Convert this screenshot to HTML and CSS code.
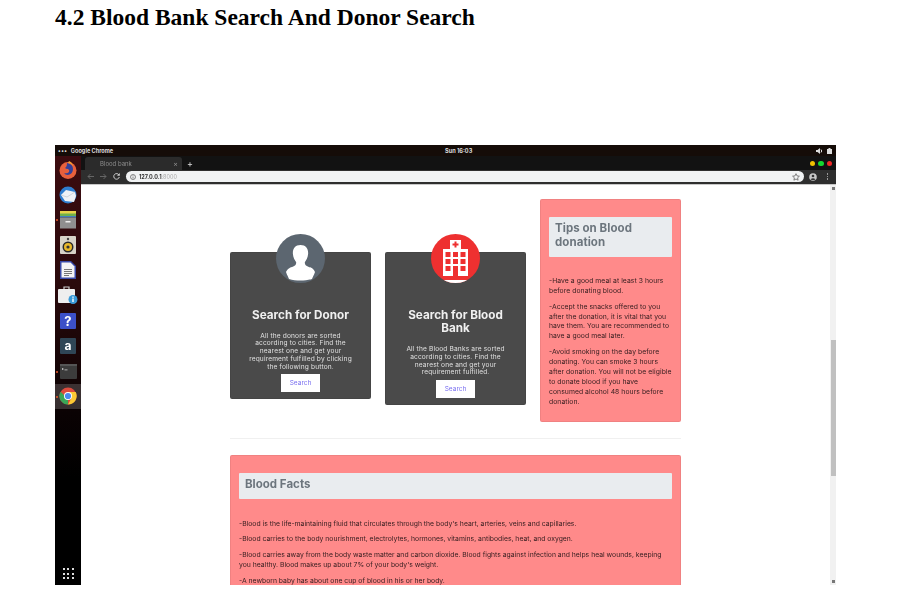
FILE: index.html
```html
<!DOCTYPE html>
<html lang="en">
<head>
    <meta charset="UTF-8">
    <meta name="viewport" content="width=device-width, initial-scale=1.0">
    <title>4.2 Blood Bank Search And Donor Search</title>
    <link rel="stylesheet" href="styles.css">
</head>
<body>
    <h1 class="doc-title">4.2 Blood Bank Search And Donor Search</h1>

    <div class="desktop">
        <div class="topbar">
            <div class="topbar-left"><span class="dots">&bull;&bull;&bull;</span> Google Chrome</div>
            <div class="clock">Sun 16:03</div>
            <div class="tray">
                <svg width="7" height="6" viewBox="0 0 7 6"><path d="M0 2h1.500L4 0v6L1.500 4H0z" fill="#ddd"/><path d="M5 1.500q1.500 1.500 0 3" stroke="#ddd" fill="none"/></svg>
                <svg width="5" height="6" viewBox="0 0 5 6"><path d="M1.500 0h2v1H5v5H0V1h1.500z" fill="#ddd"/></svg>
            </div>
        </div>

        <div class="workspace">
            <nav class="dock">
                <div class="dock-item">
                    <svg width="20" height="20" viewBox="0 0 20 20"><circle cx="10" cy="10.500" r="8.500" fill="#e8603c"/><path d="M9 3q6 1 6 6 0 5-5 6-3 0-4-2 3 1 5-1 1-2-1-3-2 0-3-1 2-1 2-5z" fill="#33409a"/><path d="M11 1q3 1 4 5-2-3-5-3z" fill="#f4a030"/></svg>
                </div>
                <div class="dock-item">
                    <svg width="20" height="20" viewBox="0 0 20 20"><circle cx="10" cy="10" r="8.500" fill="#2f7ed0"/><path d="M3 10l5-5 9 2 1 4-2 6-9-1z" fill="#eef2f6"/><path d="M3 10l6 2 8-5" stroke="#c6ccd4" fill="none" stroke-width=".8"/></svg>
                </div>
                <div class="dock-item running">
                    <svg width="18" height="18" viewBox="0 0 18 18"><rect x="1" y="0" width="16" height="3" fill="#e8d24a"/><rect x="1" y="2.500" width="16" height="3" fill="#6fb04a"/><rect x="1" y="5" width="16" height="1.500" fill="#3f7fc0"/><rect x="1" y="6.500" width="16" height="11" fill="#8f8f8f"/><rect x="6.500" y="10" width="5" height="1.500" fill="#eee"/></svg>
                </div>
                <div class="dock-item">
                    <svg width="16" height="18" viewBox="0 0 16 18"><rect width="16" height="18" rx="1" fill="#d8d4c8"/><circle cx="8" cy="3" r="1.200" fill="#444"/><circle cx="8" cy="11" r="5.500" fill="#2a2a2a"/><circle cx="8" cy="11" r="4" fill="#e8b82a"/><circle cx="8" cy="11" r="1.600" fill="#333"/></svg>
                </div>
                <div class="dock-item">
                    <svg width="16" height="18" viewBox="0 0 16 18"><path d="M0 0h11l5 5v13H0z" fill="#3a4aa8"/><path d="M1.500 1.500h9l4 4v11h-13z" fill="#f4f4f4"/><path d="M4 8h8v1H4zM4 10h8v1H4zM4 12h8v1H4zM4 14h5v1H4z" fill="#777"/></svg>
                </div>
                <div class="dock-item">
                    <svg width="21" height="19" viewBox="0 0 21 19"><rect x="0" y="3" width="17" height="14" rx="1" fill="#eeeeee"/><path d="M6 3V1h5v2" stroke="#ccc" fill="none" stroke-width="1.200"/><circle cx="15" cy="13.500" r="4.500" fill="#3a9ad8"/><rect x="14.300" y="12.500" width="1.400" height="3.500" fill="#fff"/><rect x="14.300" y="10.500" width="1.400" height="1.300" fill="#fff"/></svg>
                </div>
                <div class="dock-item">
                    <div class="dock-tile tile-help">?</div>
                </div>
                <div class="dock-item">
                    <div class="dock-tile tile-amazon">a</div>
                </div>
                <div class="dock-item running">
                    <svg width="17" height="15" viewBox="0 0 17 15"><rect width="17" height="15" rx="1" fill="#3c3c3c"/><rect width="17" height="2" fill="#555"/><path d="M2 4l2 1-2 1z" fill="#ddd"/><rect x="4.500" y="5.500" width="3" height=".8" fill="#ccc"/></svg>
                </div>
                <div class="dock-item running active">
                    <svg width="18" height="18" viewBox="0 0 18 18"><circle cx="9" cy="9" r="8.500" fill="#dd4b3e"/><path d="M1.600 13.300A8.500 8.500 0 0 1 1.600 4.700L6 9l3 4-2 4.300z" fill="#3aa757"/><path d="M9 9L1.600 13.300A8.500 8.500 0 0 0 9 17.500z" fill="#3aa757"/><path d="M9 5h7.700A8.500 8.500 0 0 1 9 17.500L12.500 11z" fill="#fcc934"/><circle cx="9" cy="9" r="4" fill="#fff"/><circle cx="9" cy="9" r="3.100" fill="#4a8af0"/></svg>
                </div>
                <div class="dock-apps">
                    <i></i><i></i><i></i><i></i><i></i><i></i><i></i><i></i><i></i>
                </div>
            </nav>

            <div class="browser">
                <div class="tabstrip">
                    <div class="tab">
                        <span class="tab-title">Blood bank</span>
                        <span class="tab-close">&times;</span>
                    </div>
                    <span class="new-tab">+</span>
                    <div class="window-dots">
                        <i class="dot-yellow"></i><i class="dot-green"></i><i class="dot-red"></i>
                    </div>
                </div>

                <div class="toolbar">
                    <div class="nav-buttons">
                        <svg width="7" height="7" viewBox="0 0 7 7"><path d="M7 3.500H1M3.500 1L1 3.500 3.500 6" stroke="#666" fill="none"/></svg>
                        <svg width="7" height="7" viewBox="0 0 7 7"><path d="M0 3.500h6M3.500 1L6 3.500 3.500 6" stroke="#666" fill="none"/></svg>
                        <svg width="7" height="7" viewBox="0 0 7 7"><path d="M6 2A2.800 2.800 0 1 0 6.300 4" stroke="#ccc" fill="none"/><path d="M6.800 0v2.800H4z" fill="#ccc"/></svg>
                    </div>
                    <div class="urlbar">
                        <svg width="6" height="6" viewBox="0 0 6 6"><circle cx="3" cy="3" r="2.500" stroke="#555" fill="none" stroke-width=".7"/><path d="M3 2.500v2M3 1.400v.6" stroke="#555" stroke-width=".7"/></svg>
                        <span class="url"><b>127.0.0.1</b>:8000</span>
                        <svg class="star" width="8" height="8" viewBox="0 0 8 8"><path d="M4 .7l1 2.200 2.400.3-1.800 1.600.5 2.400L4 6 1.900 7.200l.5-2.400L.6 3.200 3 2.900z" stroke="#666" fill="none" stroke-width=".8"/></svg>
                    </div>
                    <div class="toolbar-right">
                        <svg width="8" height="8" viewBox="0 0 8 8"><circle cx="4" cy="4" r="3.800" fill="#c8c8c8"/><circle cx="4" cy="3" r="1.300" fill="#333"/><path d="M1.500 6.200q2.500-2 5 0-2.500 1.700-5 0z" fill="#333"/></svg>
                        <span class="menu-dots"><i></i><i></i><i></i></span>
                    </div>
                </div>

                <div class="viewport">
                    <div class="page">
                        <div class="row">
                            <div class="card card-search">
                                <div class="avatar avatar-donor">
                                    <svg width="49" height="49" viewBox="0 0 49 49"><path d="M24.500 11c-5.500 0-8 4-7.600 9 .3 3.500 1.800 6.300 3.300 8.200 0 2.300-.8 3.300-3 4.200-3 1.200-5.800 2-7.200 5.600 1 3 2.500 5.500 3 7 3.500 1 7.500 1.500 11.500 1.500s8-.5 11.500-1.500c.5-1.500 2-4 3-7-1.400-3.600-4.200-4.400-7.200-5.600-2.200-.9-3-1.900-3-4.200 1.500-1.900 3-4.700 3.300-8.200.4-5-2.100-9-7.600-9z" fill="#fff"/></svg>
                                </div>
                                <h2>Search for Donor</h2>
                                <p>All the donors are sorted according to cities. Find the nearest one and get your requirement fulfilled by clicking the following button.</p>
                                <button class="search-btn">Search</button>
                            </div>

                            <div class="card card-search">
                                <div class="avatar avatar-bank">
                                    <svg width="49" height="49" viewBox="0 0 49 49"><path d="M6 46h37l-3 3H9z" fill="#fff"/><rect x="12" y="15" width="25" height="27" fill="#fff"/><rect x="19" y="6" width="11" height="9" fill="#fff"/><path d="M23.500 7.500h2v2h2v2h-2v2h-2v-2h-2v-2h2z" fill="#ee3030"/><g fill="#ee3030"><rect x="14.500" y="18" width="5" height="5"/><rect x="22" y="18" width="5" height="5"/><rect x="29.500" y="18" width="5" height="5"/><rect x="14.500" y="25" width="5" height="5"/><rect x="22" y="25" width="5" height="5"/><rect x="29.500" y="25" width="5" height="5"/><rect x="14.500" y="32" width="5" height="5"/><rect x="29.500" y="32" width="5" height="5"/><rect x="22" y="32" width="5" height="10"/></g></svg>
                                </div>
                                <h2>Search for Blood Bank</h2>
                                <p>All the Blood Banks are sorted according to cities. Find the nearest one and get your requirement fulfilled.</p>
                                <button class="search-btn">Search</button>
                            </div>

                            <div class="card card-info">
                                <div class="info-head"><h3>Tips on Blood donation</h3></div>
                                <p>-Have a good meal at least 3 hours before donating blood.</p>
                                <p>-Accept the snacks offered to you after the donation, it is vital that you have them. You are recommended to have a good meal later.</p>
                                <p>-Avoid smoking on the day before donating. You can smoke 3 hours after donation. You will not be eligible to donate blood if you have consumed alcohol 48 hours before donation.</p>
                            </div>
                        </div>

                        <hr class="divider">

                        <div class="card card-info card-facts">
                            <div class="info-head"><h3>Blood Facts</h3></div>
                            <p>-Blood is the life-maintaining fluid that circulates through the body's heart, arteries, veins and capillaries.</p>
                            <p>-Blood carries to the body nourishment, electrolytes, hormones, vitamins, antibodies, heat, and oxygen.</p>
                            <p>-Blood carries away from the body waste matter and carbon dioxide. Blood fights against infection and helps heal wounds, keeping you healthy. Blood makes up about 7% of your body's weight.</p>
                            <p>-A newborn baby has about one cup of blood in his or her body.</p>
                        </div>
                    </div>

                    <div class="scrollbar">
                        <span class="arrow-up"></span>
                        <span class="thumb"></span>
                        <span class="arrow-down"></span>
                    </div>
                </div>
            </div>
        </div>
    </div>
</body>
</html>
```

FILE: styles.css
```css
html, body {
    height: 100%;
    overflow: hidden;
}
body {
    margin: 0;
    background: #fff;
    font-family: Inter, "Open Sans", sans-serif;
}
.doc-title {
    margin: 0;
    padding: 4px 0 0 55px;
    height: 140px;
    box-sizing: border-box;
    font-family: "Liberation Serif", serif;
    font-size: 23.5px;
    line-height: 26px;
    font-weight: bold;
    color: #000;
}

/* screenshot pasted in the document */
.desktop {
    margin-left: 55px;
    margin-top: 5px;
    width: 781px;
    height: 440px;
    display: flex;
    flex-direction: column;
    filter: blur(0.5px);
}
.topbar {
    height: 11px;
    flex: none;
    display: flex;
    align-items: center;
    justify-content: space-between;
    background: #150c08;
    color: #ddd;
    font-size: 5.6px;
    font-weight: 700;
    padding: 0 4px 0 3px;
    position: relative;
}
.topbar-left .dots {
    letter-spacing: 0.5px;
    margin-right: 2px;
}
.clock {
    position: absolute;
    left: 390px;
}
.tray {
    display: flex;
    gap: 4px;
    align-items: center;
}
.workspace {
    flex: 1;
    display: flex;
    min-height: 0;
}

.dock {
    width: 26px;
    flex: none;
    display: flex;
    flex-direction: column;
    align-items: stretch;
    padding-top: 1px;
    background: linear-gradient(#3c0c10, #2a0a0c 30%, #0a0203 60%, #000 75%);
}
.dock-item {
    height: 25.2px;
    display: flex;
    align-items: center;
    justify-content: center;
    position: relative;
}
.dock-item.running::before {
    content: "";
    position: absolute;
    left: 1px;
    top: 12px;
    width: 2px;
    height: 2px;
    border-radius: 50%;
    background: #e8582a;
}
.dock-item.active {
    background: rgba(255, 255, 255, 0.18);
}
.dock-tile {
    width: 16px;
    height: 16px;
    display: flex;
    align-items: center;
    justify-content: center;
    color: #fff;
    font-weight: 700;
    font-size: 13px;
    border-radius: 1px;
}
.tile-help {
    background: #3c50c8;
}
.tile-amazon {
    background: #2f4656;
    font-size: 12px;
}
.dock-apps {
    margin-top: auto;
    margin-bottom: 6px;
    align-self: center;
    display: grid;
    grid-template-columns: repeat(3, 2px);
    gap: 2.5px;
}
.dock-apps i {
    width: 2px;
    height: 2px;
    background: #ddd;
}

.browser {
    flex: 1;
    min-width: 0;
    display: flex;
    flex-direction: column;
}
.tabstrip {
    height: 14px;
    flex: none;
    display: flex;
    align-items: flex-end;
    background: #121212;
    padding-left: 4px;
}
.tab {
    width: 97px;
    height: 13px;
    box-sizing: border-box;
    padding: 0 4px 0 15px;
    display: flex;
    align-items: center;
    justify-content: space-between;
    background: #2b2b2b;
    border-radius: 3px 3px 0 0;
    color: #8c8c8c;
    font-size: 6px;
}
.tab-close {
    font-size: 7px;
}
.new-tab {
    color: #ddd;
    font-size: 9px;
    line-height: 13px;
    margin-left: 5px;
}
.window-dots {
    margin-left: auto;
    height: 13px;
    display: flex;
    align-items: center;
    gap: 3px;
    padding-right: 4px;
}
.window-dots i {
    width: 5.5px;
    height: 5.5px;
    border-radius: 50%;
}
.dot-yellow { background: #f0c000; }
.dot-green { background: #14d830; }
.dot-red { background: #f02828; }

.toolbar {
    height: 15px;
    flex: none;
    box-sizing: border-box;
    display: flex;
    align-items: center;
    background: #2e2e2e;
    border-bottom: 1px solid #c8c8c8;
    padding: 0 6px 1px 6px;
}
.nav-buttons {
    width: 39px;
    display: flex;
    gap: 6px;
    align-items: center;
}
.urlbar {
    flex: 1;
    height: 11px;
    display: flex;
    align-items: center;
    gap: 3px;
    padding: 0 4px 0 4px;
    background: #f1f3f4;
    border-radius: 6px;
    font-size: 5.5px;
    color: #aaa;
}
.url b {
    color: #333;
    font-weight: 700;
}
.star {
    margin-left: auto;
}
.toolbar-right {
    width: 26px;
    display: flex;
    align-items: center;
    justify-content: space-between;
    padding: 0 2px 0 5px;
    box-sizing: border-box;
}
.menu-dots {
    display: flex;
    flex-direction: column;
    gap: 1px;
}
.menu-dots i {
    width: 1.5px;
    height: 1.5px;
    background: #999;
}

.viewport {
    flex: 1;
    min-height: 0;
    display: flex;
    background: #fff;
    overflow: hidden;
}
.page {
    flex: 1;
    min-width: 0;
    padding: 14px 0 0 149px;
}
.row {
    width: 451px;
    display: grid;
    grid-template-columns: 141px 141px 141px;
    column-gap: 14px;
    align-items: start;
}
.card {
    border-radius: 2px;
    box-sizing: border-box;
    border: 1px solid rgba(0, 0, 0, 0.06);
}
.card-search {
    margin-top: 53px;
    padding: 0 10px 6px;
    background: #4a4a4a;
    color: #eee;
    text-align: center;
}
.card-search h2 {
    margin: 25.5px 0 10.5px;
    font-size: 11.7px;
    line-height: 13.5px;
    font-weight: 700;
    color: #f0f0f0;
}
.card-search p {
    margin: 0 0 1px;
    padding: 0 6px;
    font-size: 6.6px;
    line-height: 7.8px;
    letter-spacing: 0.15px;
    color: #e0e0e0;
}
.avatar {
    width: 49px;
    height: 49px;
    border-radius: 50%;
    margin: -19px auto 0;
    overflow: hidden;
}
.avatar-donor { background: #5c6670; }
.avatar-bank { background: #ee3030; }
.search-btn {
    display: block;
    margin: 3px auto 0;
    width: 39px;
    height: 18px;
    padding: 0;
    border: none;
    background: #fff;
    color: #7a70f0;
    font-family: inherit;
    font-size: 6.5px;
}
.card-info {
    background: #ff8a8a;
    padding: 17px 8px 9px;
    color: #3a2022;
    font-size: 6.8px;
    line-height: 9.9px;
    letter-spacing: 0.06px;
}
.card-info p {
    margin: 0 0 5.8px;
}
.info-head {
    margin-bottom: 19.5px;
    padding: 5px 6px 7.5px;
    background: #e9ecef;
    border-radius: 1px;
}
.info-head h3 {
    margin: 0;
    font-size: 11.5px;
    line-height: 13.5px;
    font-weight: 700;
    color: #6c757d;
}
.divider {
    width: 451px;
    margin: 16px 0 16px;
    border: none;
    border-top: 1px solid #f0f0f0;
}
.card-facts {
    width: 451px;
    letter-spacing: 0.01px;
}
.scrollbar {
    width: 6px;
    flex: none;
    position: relative;
    background: #f1f1f1;
}
.thumb {
    position: absolute;
    left: 0.5px;
    top: 155px;
    width: 5px;
    height: 136px;
    background: #c0c0c0;
}
.arrow-up, .arrow-down {
    position: absolute;
    left: 1.5px;
    width: 3px;
    height: 3px;
    background: #777;
}
.arrow-up { top: 2px; }
.arrow-down { bottom: 2px; }
```
